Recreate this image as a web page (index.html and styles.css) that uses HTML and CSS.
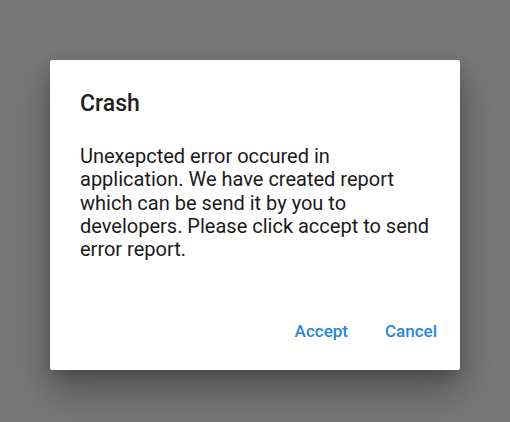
FILE: index.html
```html
<!DOCTYPE html>
<html>
<head>
<meta charset="utf-8">
<link rel="stylesheet" href="styles.css">
</head>
<body>
<div class="screen">
  <div class="dialog">
    <h1 class="title">Crash</h1>
    <p class="message">Unexepcted error occured in application. We have created report which can be send it by you to developers. Please click accept to send error report.</p>
    <div class="actions">
      <span class="btn">Accept</span>
      <span class="btn">Cancel</span>
    </div>
  </div>
</div>
</body>
</html>
```
FILE: styles.css
```css
html, body {
  margin: 0;
  padding: 0;
  width: 510px;
  height: 422px;
  overflow: hidden;
  background: #777777;
  font-family: Roboto, "Noto Sans", sans-serif;
}
.screen {
  width: 510px;
  height: 422px;
  display: flex;
  justify-content: center;
  padding-top: 60px;
  box-sizing: border-box;
}
.dialog {
  width: 410px;
  height: 310px;
  background: #ffffff;
  border-radius: 2px;
  box-shadow: 0 20px 40px rgba(0,0,0,0.3), 0 6px 14px rgba(0,0,0,0.18);
  box-sizing: border-box;
  padding: 31px 30px 0 30px;
  display: flex;
  flex-direction: column;
}
.title {
  margin: 0;
  font-size: 23px;
  font-weight: 500;
  line-height: 26px;
  color: #212121;
}
.message {
  margin: 28px 0 0 0;
  font-size: 20px;
  line-height: 23.3px;
  color: #1a1a1a;
}
.actions {
  margin-top: auto;
  margin-bottom: 29px;
  margin-right: -7px;
  display: flex;
  justify-content: flex-end;
  gap: 37px;
}
.btn {
  font-size: 17px;
  font-weight: 500;
  color: #1e88e5;
  line-height: 20px;
}
```
